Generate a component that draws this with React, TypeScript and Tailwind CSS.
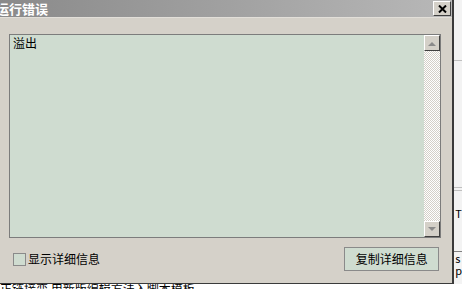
import React from 'react';

const font = { fontFamily: '"Noto Sans CJK SC", "DejaVu Sans", sans-serif' };

const Arrow = ({ up }: { up?: boolean }) => (
  <div className="flex h-[16px] w-[16px] items-center justify-center border border-t-white border-l-white border-r-[#404040] border-b-[#404040] bg-[#d4d0c8]">
    <svg width="8" height="5" viewBox="0 0 8 5">
      {up ? <path d="M0 5 L4 1 L8 5 Z" fill="#8a8a8a" /> : <path d="M0 0 L8 0 L4 4 Z" fill="#8a8a8a" />}
    </svg>
  </div>
);

export default function App() {
  return (
    <div className="flex h-[289px] w-[462px] flex-col overflow-hidden bg-white" style={font}>
      <div className="flex h-[284px]">
        <div className="flex w-[456px] flex-col border-r-2 border-b border-[#3a3a3a] bg-[#d5d1c9]">
          <div className="flex h-[18px] items-center justify-between border-b border-[#e2dfd9] bg-gradient-to-r from-[#8a8a8a] to-[#b8b8b8]">
            <span className="-ml-[4px] text-[13px] font-bold leading-none text-white">运行错误</span>
            <div className="mr-[1px] flex h-[15px] w-[18px] items-center justify-center border border-t-white border-l-white border-r-[#404040] border-b-[#404040] bg-[#d4d0c8]">
              <svg width="9" height="8" viewBox="0 0 9 8">
                <path d="M1 0.5 L8 7.5 M8 0.5 L1 7.5" stroke="#000" strokeWidth="2" />
              </svg>
            </div>
          </div>
          <div className="flex flex-1 flex-col px-[9px] pt-[16px]">
            <div className="flex h-[204px] w-[432px] border border-[#7c7c7c] bg-[#cfdcd0]">
              <div className="flex-1 pl-[3px] pt-[1px] text-[12px] leading-[14px] text-black">溢出</div>
              <div className="flex w-[16px] flex-col">
                <Arrow up />
                <div className="flex-1 bg-[repeating-conic-gradient(#d4d0c8_0_25%,#ffffff_0_50%)] bg-[length:2px_2px]" />
                <Arrow />
              </div>
            </div>
            <div className="mt-[9px] flex items-center justify-between">
              <div className="ml-[4px] flex items-center gap-[2px]">
                <div className="h-[13px] w-[13px] border border-[#8a8a8a] bg-[#cfdcd0]" />
                <span className="text-[12px] leading-none text-black">显示详细信息</span>
              </div>
              <div className="mr-[4px] flex h-[24px] w-[95px] items-center justify-center border border-[#8a8a8a] bg-[#cfdcd0] text-[12px] text-black">
                复制详细信息
              </div>
            </div>
          </div>
        </div>
        <div className="flex flex-1 flex-col bg-[#f3f3f3]">
          <div className="mt-[60px] h-[1px] bg-[#c0c0c0]" />
          <div className="mt-[126px] h-[1px] bg-[#c0c0c0]" />
          <div className="mt-[2px] h-[1px] bg-[#c0c0c0]" />
          <div className="mt-[17px] pl-[1px] text-[11px] leading-none text-black">T</div>
          <div className="mt-[32px] h-[1px] bg-[#808080]" />
          <div className="pl-[1px] text-[11px] leading-[12px] text-black">s</div>
          <div className="pl-[1px] text-[11px] leading-[12px] text-black">p</div>
        </div>
      </div>
      <div className="h-[5px] overflow-hidden bg-white">
        <div className="-mt-[1px] whitespace-nowrap text-[12px] leading-none text-black">
          正链接变 用新版编辑方法入脚本模板
        </div>
      </div>
    </div>
  );
}
